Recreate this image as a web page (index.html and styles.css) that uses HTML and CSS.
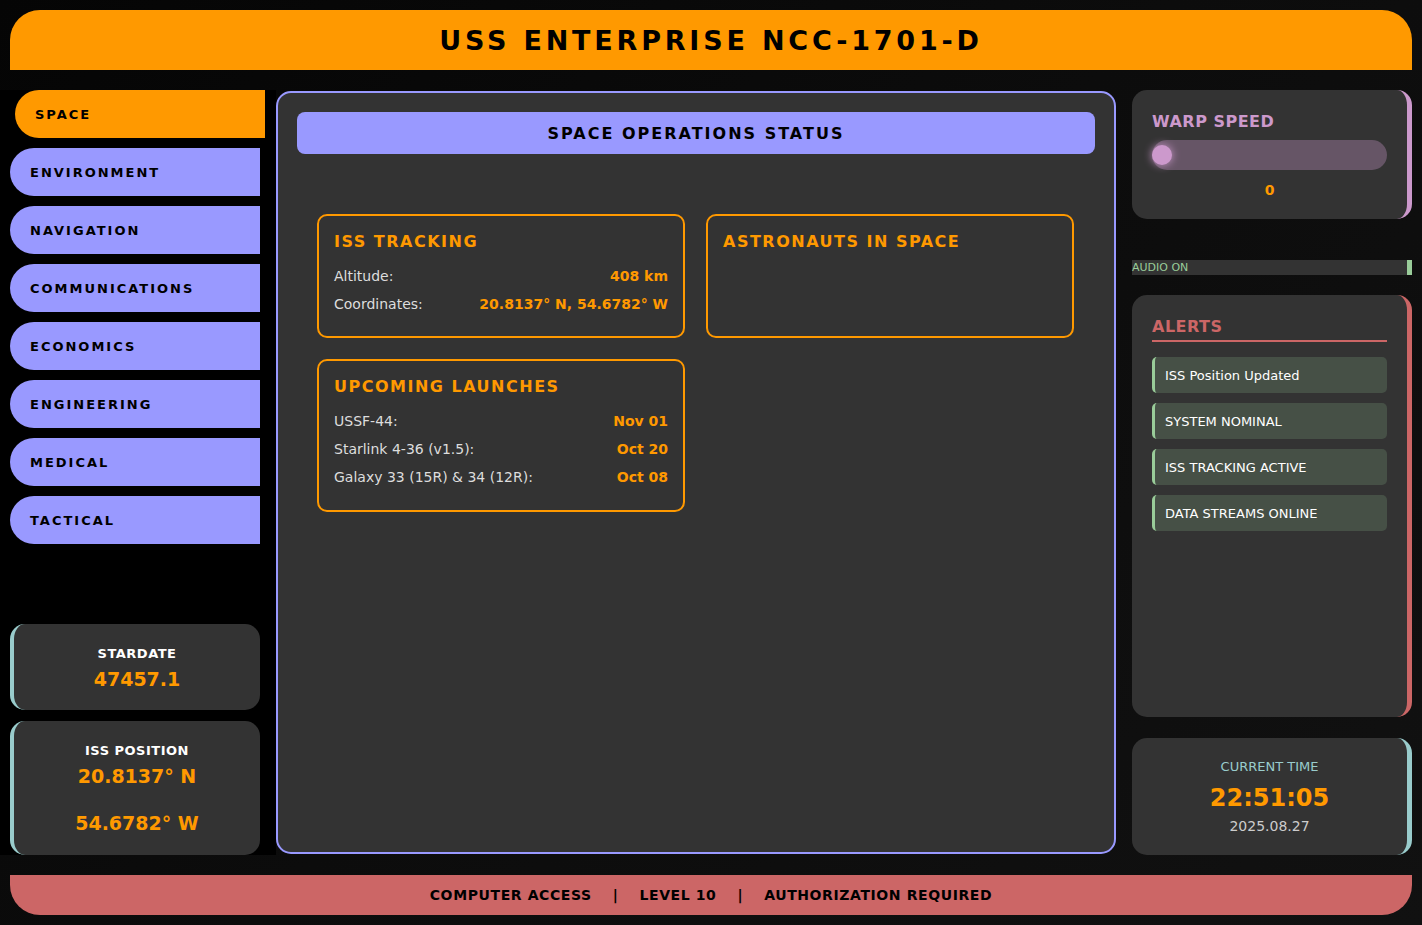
FILE: index.html
```html
<!DOCTYPE html>
<html lang="en">
<head>
<meta charset="utf-8">
<title>USS Enterprise NCC-1701-D</title>
<link rel="stylesheet" href="styles.css">
</head>
<body>
<div class="lcars">
  <header class="top-bar">
    <h1 class="ship-name">USS ENTERPRISE NCC-1701-D</h1>
  </header>

  <aside class="left-col">
    <nav class="nav">
      <button class="nav-btn active">SPACE</button>
      <button class="nav-btn">ENVIRONMENT</button>
      <button class="nav-btn">NAVIGATION</button>
      <button class="nav-btn">COMMUNICATIONS</button>
      <button class="nav-btn">ECONOMICS</button>
      <button class="nav-btn">ENGINEERING</button>
      <button class="nav-btn">MEDICAL</button>
      <button class="nav-btn">TACTICAL</button>
    </nav>
    <div class="info-stack">
      <div class="info-panel stardate">
        <div class="info-label">STARDATE</div>
        <div class="info-value">47457.1</div>
      </div>
      <div class="info-panel iss-pos">
        <div class="info-label">ISS POSITION</div>
        <div class="info-value">20.8137° N</div>
        <div class="info-value second">54.6782° W</div>
      </div>
    </div>
  </aside>

  <main class="main-panel">
    <div class="section-bar">SPACE OPERATIONS STATUS</div>
    <div class="cards">
      <section class="card">
        <h2 class="card-title">ISS TRACKING</h2>
        <div class="row"><span class="k">Altitude:</span><span class="v">408 km</span></div>
        <div class="row"><span class="k">Coordinates:</span><span class="v">20.8137° N, 54.6782° W</span></div>
      </section>
      <section class="card">
        <h2 class="card-title">ASTRONAUTS IN SPACE</h2>
      </section>
      <section class="card launches">
        <h2 class="card-title">UPCOMING LAUNCHES</h2>
        <div class="row"><span class="k">USSF-44:</span><span class="v">Nov 01</span></div>
        <div class="row"><span class="k">Starlink 4-36 (v1.5):</span><span class="v">Oct 20</span></div>
        <div class="row"><span class="k">Galaxy 33 (15R) &amp; 34 (12R):</span><span class="v">Oct 08</span></div>
      </section>
    </div>
  </main>

  <aside class="right-col">
    <div class="side-panel warp">
      <div class="warp-title">WARP SPEED</div>
      <div class="slider"><span class="thumb"></span></div>
      <div class="warp-value">0</div>
    </div>
    <div class="audio">AUDIO ON</div>
    <div class="side-panel alerts">
      <div class="alerts-title">ALERTS</div>
      <div class="alert">ISS Position Updated</div>
      <div class="alert">SYSTEM NOMINAL</div>
      <div class="alert">ISS TRACKING ACTIVE</div>
      <div class="alert">DATA STREAMS ONLINE</div>
    </div>
    <div class="side-panel clock">
      <div class="clock-label">CURRENT TIME</div>
      <div class="clock-time">22:51:05</div>
      <div class="clock-date">2025.08.27</div>
    </div>
  </aside>

  <footer class="bottom-bar">
    <span>COMPUTER ACCESS</span><span class="sep">|</span><span>LEVEL 10</span><span class="sep">|</span><span>AUTHORIZATION REQUIRED</span>
  </footer>
</div>
</body>
</html>
```

FILE: styles.css
```css
* { box-sizing: border-box; }
html, body { margin: 0; padding: 0; }
body {
  background: linear-gradient(135deg, #050505 0%, #0c0c0c 50%, #111 100%);
  font-family: "DejaVu Sans", "Noto Sans", sans-serif;
  color: #ddd;
  height: 925px;
  overflow: hidden;
}
.lcars {
  display: grid;
  grid-template-columns: 250px 1fr 280px;
  grid-template-rows: 60px 1fr 40px;
  column-gap: 16px;
  row-gap: 20px;
  padding: 10px;
  height: 925px;
}
.top-bar {
  grid-column: 1 / 4;
  background: #ff9900;
  border-radius: 30px 30px 0 0;
  display: flex;
  align-items: center;
  justify-content: center;
}
.ship-name {
  margin: 0;
  font-size: 27px;
  font-weight: bold;
  letter-spacing: 3.8px;
  color: #000;
}

.left-col {
  display: flex;
  flex-direction: column;
  background: #000;
  margin: 0 -16px 0 -10px;
  padding: 0 16px 0 10px;
}
.nav { display: flex; flex-direction: column; gap: 10px; }
.nav-btn {
  height: 48px;
  width: 250px;
  border: none;
  background: #9999ff;
  border-radius: 24px 0 0 24px;
  text-align: left;
  padding: 0 0 0 20px;
  font-family: "DejaVu Sans", sans-serif;
  font-weight: bold;
  font-size: 13px;
  letter-spacing: 2px;
  color: #000;
}
.nav-btn.active {
  background: #ff9900;
  transform: translateX(5px);
}
.info-stack {
  margin-top: auto;
  display: flex;
  flex-direction: column;
  gap: 11px;
}
.info-panel {
  background: #333;
  border-radius: 15px;
  border-left: 4px solid #99cccc;
  text-align: center;
  padding: 22px 10px 16px;
}
.stardate { height: 86px; }
.iss-pos { height: 134px; }
.info-label {
  color: #fff;
  font-weight: bold;
  font-size: 13px;
  letter-spacing: 0.5px;
}
.info-value {
  color: #ff9900;
  font-size: 19px;
  font-weight: bold;
  margin-top: 7px;
  letter-spacing: 0;
}
.info-value.second { margin-top: 25px; }

.main-panel {
  background: #333;
  border: 2px solid #9999ff;
  border-radius: 15px;
  padding: 19px;
  margin-top: 1px;
  margin-bottom: 1px;
}
.section-bar {
  background: #9999ff;
  border-radius: 8px;
  height: 42px;
  display: flex;
  align-items: center;
  justify-content: center;
  color: #000;
  font-size: 16px;
  letter-spacing: 2px;
  font-weight: bold;
}
.cards {
  display: grid;
  grid-template-columns: 368px 368px;
  column-gap: 21px;
  row-gap: 21px;
  margin: 60px 20px 0;
  align-items: start;
}
.card {
  border: 2px solid #ff9900;
  border-radius: 10px;
  padding: 16px 15px 15px;
  min-height: 124px;
}
.card.launches { padding-bottom: 19px; }
.card-title {
  margin: 0 0 11px;
  color: #ff9900;
  font-size: 16px;
  font-weight: bold;
  letter-spacing: 1.5px;
}
.row {
  display: flex;
  justify-content: space-between;
  height: 28px;
  align-items: center;
  font-size: 14px;
}
.k { color: #ddd; }
.v { color: #ff9900; font-weight: bold; }

.right-col {
  display: flex;
  flex-direction: column;
}
.side-panel {
  background: #333;
  border-radius: 15px;
}
.warp {
  height: 129px;
  border-right: 5px solid #cc99cc;
  padding: 22px 20px 0;
}
.warp-title {
  color: #cc99cc;
  font-weight: bold;
  font-size: 16px;
  letter-spacing: 0.5px;
}
.slider {
  margin-top: 9px;
  height: 30px;
  border-radius: 15px;
  background: #665566;
  display: flex;
  align-items: center;
}
.thumb {
  width: 20px;
  height: 20px;
  border-radius: 50%;
  background: #cc99cc;
  box-shadow: 0 0 8px #cc99cc;
}
.warp-value {
  text-align: center;
  color: #ff9900;
  font-weight: bold;
  font-size: 14px;
  margin-top: 12px;
}
.audio {
  margin-top: 41px;
  height: 15px;
  background: #333;
  border-right: 5px solid #99cc99;
  color: #99cc99;
  font-size: 11px;
  line-height: 15px;
}
.alerts {
  margin-top: 20px;
  flex: 1;
  border-right: 5px solid #cc6666;
  padding: 22px 20px 0;
}
.alerts-title {
  color: #cc6666;
  font-weight: bold;
  font-size: 16px;
  letter-spacing: 0.5px;
  padding-bottom: 4px;
  border-bottom: 2px solid #cc6666;
  margin-bottom: 15px;
}
.alert {
  height: 36px;
  background: #465046;
  border-left: 3px solid #99cc99;
  border-radius: 5px;
  color: #fff;
  font-size: 13px;
  display: flex;
  align-items: center;
  padding-left: 10px;
  margin-bottom: 10px;
}
.clock {
  margin-top: 21px;
  height: 117px;
  border-right: 5px solid #99cccc;
  text-align: center;
  padding-top: 21px;
}
.clock-label { color: #99cccc; font-size: 13px; }
.clock-time {
  color: #ff9900;
  font-weight: bold;
  font-size: 24px;
  margin-top: 10px;
  letter-spacing: 0;
}
.clock-date { color: #ccc; font-size: 14px; margin-top: 6px; }

.bottom-bar {
  grid-column: 1 / 4;
  background: #cc6666;
  border-radius: 0 0 30px 30px;
  display: flex;
  align-items: center;
  justify-content: center;
  gap: 21px;
  color: #000;
  font-size: 14px;
  font-weight: bold;
  letter-spacing: 0.6px;
}
.sep { font-weight: bold; }
```
